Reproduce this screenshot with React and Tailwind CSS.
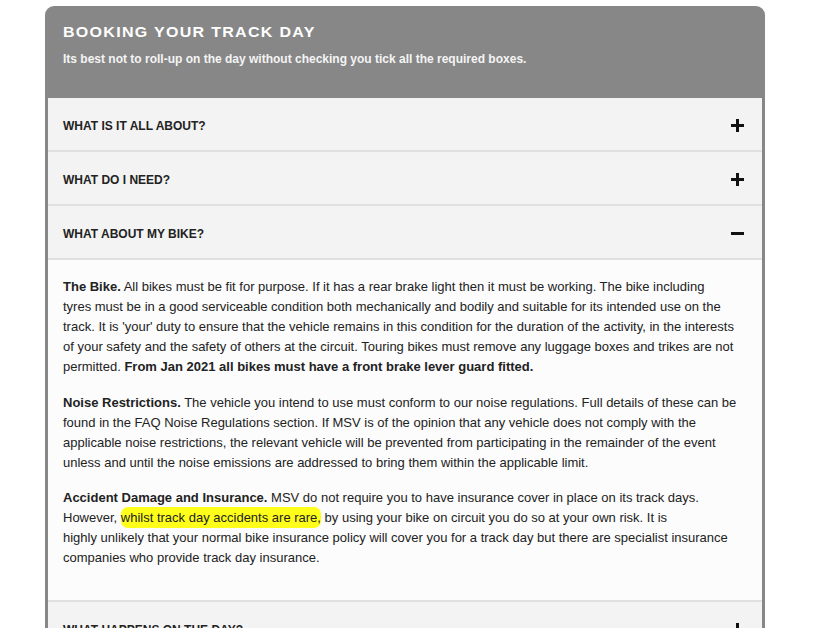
import React from "react";

function Plus() {
  return (
    <svg width="13" height="13" viewBox="0 0 13 13" className="block">
      <rect x="0" y="5" width="13" height="3" fill="#111" />
      <rect x="5" y="0" width="3" height="13" fill="#111" />
    </svg>
  );
}
function Minus() {
  return (
    <svg width="13" height="13" viewBox="0 0 13 13" className="block">
      <rect x="0" y="5" width="13" height="3" fill="#111" />
    </svg>
  );
}

function Row({ title, open }) {
  return (
    <div className="flex h-[54px] items-center justify-between border-b-2 border-[#e0e0e0] bg-[#f3f3f3] pl-[15px] pr-[18px]">
      <span className="pt-[3px] text-[12px] font-bold text-[#222]">{title}</span>
      <span className="pt-[2px]">{open ? <Minus /> : <Plus />}</span>
    </div>
  );
}

export default function App() {
  return (
    <div className="h-[628px] overflow-hidden bg-white pt-[6px] font-['Liberation_Sans',Arial,sans-serif]">
      <div className="ml-[45px] w-[720px] overflow-hidden rounded-t-[9px] bg-[#878787] px-[3px]">
        <div className="h-[92px] px-[15px] pt-[15px]">
          <h1 className="text-[16px] font-bold tracking-[1.3px] text-white [transform:scaleY(0.92)] origin-top">
            BOOKING YOUR TRACK DAY
          </h1>
          <p className="mt-[5px] text-[12px] font-bold text-[#f4f4f4]">
            Its best not to roll-up on the day without checking you tick all the required boxes.
          </p>
        </div>
        <Row title="WHAT IS IT ALL ABOUT?" />
        <Row title="WHAT DO I NEED?" />
        <Row title="WHAT ABOUT MY BIKE?" open />
        <div className="bg-[#fcfcfc] pb-[32px] pl-[15px] pr-[17px] pt-[17px] text-[13px] leading-[20px] text-[#222]">
          <p>
            <b>The Bike.</b> All bikes must be fit for purpose. If it has a rear brake light then it must be working. The bike including
            <br />
            tyres must be in a good serviceable condition both mechanically and bodily and suitable for its intended use on the track. It is 'your' duty to ensure that the vehicle remains in this condition for the duration of the activity, in the interests of your safety and the safety of others at the circuit. Touring bikes must remove any luggage boxes and trikes are not permitted. <b>From Jan 2021 all bikes must have a front brake lever guard fitted.</b>
          </p>
          <p className="mt-[16px]">
            <b>Noise Restrictions.</b> The vehicle you intend to use must conform to our noise regulations. Full details of these can be found in the FAQ Noise Regulations section. If MSV is of the opinion that any vehicle does not comply with the applicable noise restrictions, the relevant vehicle will be prevented from participating in the remainder of the event unless and until the noise emissions are addressed to bring them within the applicable limit.
          </p>
          <p className="mt-[15px]">
            <b>Accident Damage and Insurance.</b> MSV do not require you to have insurance cover in place on its track days. However, <span className="rounded-[7px] bg-[#ffff1a] py-[3px]">whilst track day accidents are rare,</span> by using your bike on circuit you do so at your own risk. It is
            <br />
            highly unlikely that your normal bike insurance policy will cover you for a track day but there are specialist insurance companies who provide track day insurance.
          </p>
        </div>
        <div className="border-t-2 border-[#e0e0e0]">
          <Row title="WHAT HAPPENS ON THE DAY?" />
        </div>
      </div>
    </div>
  );
}
